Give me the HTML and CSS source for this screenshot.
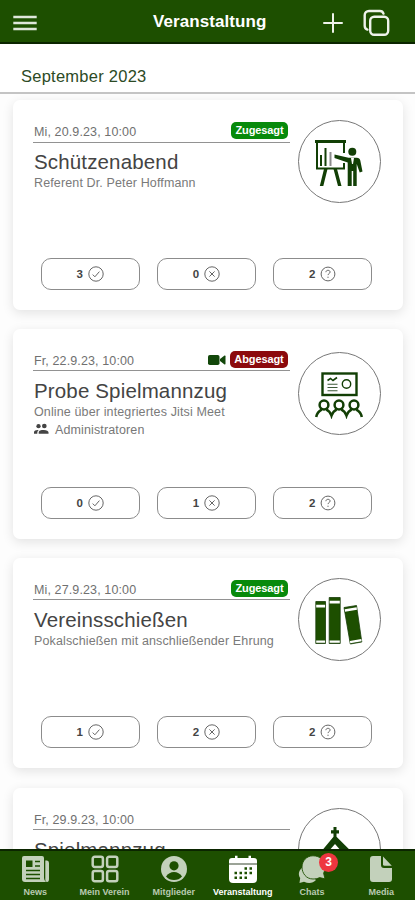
FILE: index.html
```html
<!DOCTYPE html>
<html lang="de">
<head>
<meta charset="utf-8">
<title>Veranstaltung</title>
<link rel="stylesheet" href="styles.css">
</head>
<body>
<svg class="defs" aria-hidden="true">
  <symbol id="check" viewBox="0 0 16 16"><circle cx="8" cy="8" r="7.2"/><path d="M4.7 8.6l2.2 2.2 4.5-5.2"/></symbol>
  <symbol id="cross" viewBox="0 0 16 16"><circle cx="8" cy="8" r="7.2"/><path d="M5.4 5.4l5.2 5.2M10.6 5.4l-5.2 5.2"/></symbol>
  <symbol id="help" viewBox="0 0 16 16"><circle cx="8" cy="8" r="6.9"/><path d="M5.9 6.2c.1-1.3 1-1.9 2.1-1.9 1.2 0 2.1.7 2.1 1.8 0 1.4-2.1 1.5-2.1 3M8 10.7v1.2"/></symbol>
</svg>
<div class="app">
  <header class="header">
    <svg class="menu" viewBox="0 0 26 16"><path d="M1.3 2h23.4M1.3 8h23.4M1.3 14h23.4"/></svg>
    <h1 class="header-title">Veranstaltung</h1>
    <svg class="plus" viewBox="0 0 20 20"><path d="M10 1v18M1 10h18"/></svg>
    <svg class="copy" viewBox="0 0 28 28"><rect x="7.2" y="7.7" width="18" height="18" rx="4"/><path d="M20.5 4.6C19.9 2.900 18.700 2 17 2H6C3.500 2 1.700 3.800 1.700 6.200v10.500c0 2 .9 3.300 2.700 3.900"/></svg>
  </header>
  <h2 class="month">September 2023</h2>
  <main class="list">
    <article class="card card-first">
      <div class="top">
        <div class="info">
          <div class="meta"><span class="date">Mi, 20.9.23, 10:00</span><span class="badge yes">Zugesagt</span></div>
          <h3 class="title">Schützenabend</h3>
          <p class="sub">Referent Dr. Peter Hoffmann</p>
        </div>
        <div class="circle">
          <svg viewBox="0 0 48 48"><g fill="#123f05"><path d="M0 1h31v3H0z"/><path d="M1 3h2v27H1zM1 28.500h29v2H1zM28 3h2v11h-2zM28 24h2v6h-2zM5 16h2v11H5zM9.500 9h2v18h-2z"/><path d="M9 30h3.500L8.300 47H4.800zM18.500 30H22l4.500 17H23z"/><circle cx="37.300" cy="12.700" r="4"/><path d="M19.500 15.500l14 3.200h8.300c2 0 3 1 3.500 2.800l2.200 11-2.800 1.100-3-8.600V47h-3.500V32h-1.500v15h-4V23.500l-13.200-4.500z"/></g><path d="M14.500 13h2v14h-2z" fill="#8c8c8c"/><path d="M36 19h3l-1 6h-1z" fill="#fff"/></svg>
        </div>
      </div>
      <div class="votes">
        <div class="vote">3<svg><use href="#check"/></svg></div><div class="vote">0<svg><use href="#cross"/></svg></div><div class="vote">2<svg><use href="#help"/></svg></div>
      </div>
    </article>
    <article class="card card-online">
      <div class="top">
        <div class="info">
          <div class="meta"><span class="date">Fr, 22.9.23, 10:00</span><svg class="video" viewBox="0 0 18 12"><rect width="11.500" height="10" y="1" rx="1.800"/><path d="M12 5l4.500-3.500q1-.3 1 .7v7.600q0 1-1 .7L12 7z"/></svg><span class="badge no">Abgesagt</span></div>
          <h3 class="title">Probe Spielmannzug</h3>
          <p class="sub">Online über integriertes Jitsi Meet</p>
          <p class="group"><svg viewBox="0 0 16 12"><circle cx="4.800" cy="3" r="2.300"/><circle cx="11" cy="2.800" r="2.500"/><path d="M0 11V9.500C0 7.500 2.500 6.700 5 7c-1.200.8-1.500 2-1.500 4zM5 11V9.800C5 7.500 7.500 7 10.500 7s5 1 5 2.800V11z"/></svg>Administratoren</p>
        </div>
        <div class="circle">
          <svg viewBox="0 0 48 48"><g fill="none" stroke="#123f05"><rect x="7.500" y="2.500" width="34" height="21.500" stroke-width="2.400"/><path d="M12.500 9.500l3-2 2.500 2 4-3" stroke-width="1.600"/><path d="M12.500 13.200h10M12.500 16.500h10M12.500 19.800h10" stroke="#3e5a3a" stroke-width="1.100"/><circle cx="31.500" cy="13" r="4.200" stroke-width="1.400"/><g stroke-width="2.500"><circle cx="9" cy="34" r="4.400"/><circle cx="24" cy="34" r="4.400"/><circle cx="39" cy="34" r="4.400"/><path d="M1.200 46c.6-3.500 2.700-6 5.500-7.400M11.300 38.600c2.600 1 4.200 3 5.200 6 1-3 2.600-5 5.200-6M26.300 38.600c2.600 1 4.200 3 5.200 6 1-3 2.600-5 5.200-6M41.300 38.600c2.800 1.400 4.900 3.900 5.500 7.400"/></g></g></svg>
        </div>
      </div>
      <div class="votes">
        <div class="vote">0<svg><use href="#check"/></svg></div><div class="vote">1<svg><use href="#cross"/></svg></div><div class="vote">2<svg><use href="#help"/></svg></div>
      </div>
    </article>
    <article class="card">
      <div class="top">
        <div class="info">
          <div class="meta"><span class="date">Mi, 27.9.23, 10:00</span><span class="badge yes">Zugesagt</span></div>
          <h3 class="title">Vereinsschießen</h3>
          <p class="sub">Pokalschießen mit anschließender Ehrung</p>
        </div>
        <div class="circle">
          <svg viewBox="0 0 48 48"><g fill="#1d4f00" stroke="#163b08" stroke-width=".8"><path d="M.8 4.500h9.700v42H.8zM14.200.5h11v46h-11zM29 10.500l12.500-2 5.300 36.500-11.500 2z"/></g><g fill="#fff"><path d="M1.200 7.800h8.900v2.600H1.200zM1.200 43.500h8.900v2.300H1.200zM14.600 3.800h10.200v2.600H14.600zM14.600 43.500h10.200v2.300H14.600zM29.700 12.200l11.900-2 .4 2.500-11.900 2zM34.900 44l11.400-2 .3 2.300-11.400 2z"/></g></svg>
        </div>
      </div>
      <div class="votes">
        <div class="vote">1<svg><use href="#check"/></svg></div><div class="vote">2<svg><use href="#cross"/></svg></div><div class="vote">2<svg><use href="#help"/></svg></div>
      </div>
    </article>
    <article class="card card-last">
      <div class="top">
        <div class="info">
          <div class="meta"><span class="date">Fr, 29.9.23, 10:00</span></div>
          <h3 class="title">Spielmannzug</h3>
        </div>
        <div class="circle">
          <svg viewBox="0 0 48 48"><path d="M18.500 0h3v3.200H24v3.300h-2.500v3.300L46 34v12H0V32L18.500 9.800V6.500H16V3.200h2.500z" fill="#123f05"/><path d="M20 17l7 8H13z" fill="#fff"/></svg>
        </div>
      </div>
    </article>
  </main>
  <nav class="nav">
    <a class="tab"><svg viewBox="0 0 28 28"><path d="M3 1h18q2 0 2 2v20q0 2.500 2 4H4q-3 0-3-3V3q0-2 2-2z"/><path d="M24.300 5.500H26q2 0 2 2.500v16q0 3-1.900 3t-1.800-3z"/><path d="M5 5.500h6.500V12H5z" fill="#1d4f00"/><path d="M14 6.500h5M14 11h5M5 15.500h14M5 19.500h14M5 23.500h14" stroke="#1d4f00" stroke-width="1.700"/></svg>News</a>
    <a class="tab"><svg viewBox="0 0 28 28"><g fill="none" stroke="#c3d1bb" stroke-width="2.500"><rect x="1.700" y="1.700" width="10.200" height="10.200" rx="2"/><rect x="16.100" y="1.700" width="10.200" height="10.200" rx="2"/><rect x="1.700" y="16.100" width="10.200" height="10.200" rx="2"/><rect x="16.100" y="16.100" width="10.200" height="10.200" rx="2"/></g></svg>Mein Verein</a>
    <a class="tab"><svg viewBox="0 0 28 28"><circle cx="14" cy="14" r="13"/><circle cx="14" cy="10.800" r="4.600" fill="#1d4f00"/><path d="M6 21.500q3-4.500 8-4.500t8 4.500q-3 3.500-8 3.500t-8-3.500z" fill="#1d4f00"/></svg>Mitglieder</a>
    <a class="tab active"><svg viewBox="0 0 28 28"><path d="M3 3h3V.8h2.500V3h11V.8H22V3h3q3 0 3 3v2H0V6q0-3 3-3zM0 10h28v14q0 4-4 4H4q-4 0-4-4z"/><path d="M0 8h28v2H0z" fill="#9ba397"/><path d="M15.500 13.500H18M20.500 13.500H23M5.500 18H8M10.500 18H13M15.500 18H18M20.500 18H23M5.500 22.700H8M10.500 22.700H13M15.500 22.700H18" stroke="#1d4f00" stroke-width="2.400"/></svg>Veranstaltung</a>
    <a class="tab"><span class="chat"><svg viewBox="0 0 28 28"><path d="M5 11.500C-.5 17 .5 20 2.200 23L1.500 28l4.500-1.300c5 2.300 9 1.300 12-1.700z"/><path d="M15 .8C22 .8 27 5.500 27 12c0 2.200-.4 4.300-1.400 6.200l1.400 5.600-5.500-1.200C19.500 23.800 17 24 15 24 8 24 4 18 4 12S8.500.8 15 .8z" stroke="#1d4f00" stroke-width=".9"/></svg><span class="count">3</span></span>Chats</a>
    <a class="tab"><svg viewBox="0 0 28 28"><path d="M6 1h8v9q0 3 3 3h8v11q0 3-3 3H6q-3 0-3-3V4q0-3 3-3z"/><path d="M16 1.500l8.800 9.200H17.500q-1.500 0-1.500-1.500z"/></svg>Media</a>
  </nav>
</div>
</body>
</html>
```
FILE: styles.css
```css
* { box-sizing: border-box; margin: 0; padding: 0; }
body { font-family: "Liberation Sans", Arial, sans-serif; background: #fdfdfd; }
svg { display: block; flex: none; }
.defs { display: none; }
.app { display: flex; flex-direction: column; height: 900px; width: 415px; overflow: hidden; }

.header { display: flex; align-items: center; height: 44px; flex: none; padding: 0 24px 0 12px; background: #1d4f00; border-bottom: 2px solid #0b2500; }
.header svg { fill: none; stroke: #eef2ea; stroke-linecap: round; }
.menu { width: 26px; height: 16px; margin-top: 4px; }
.header .menu { stroke-width: 2.7; stroke: #dfe7da; stroke-linecap: butt; }
.header-title { margin-left: 115px; width: 170px; font-size: 17px; line-height: 20px; letter-spacing: .08px; color: #fff; margin-top: 1px; }
.plus { width: 20px; height: 20px; stroke-width: 2; margin-top: 3px; }
.copy { width: 28px; height: 28px; stroke-width: 2.4; margin: 3px 0 0 20px; }

.month { flex: none; height: 50px; padding: 22px 0 0 21px; background: #fff; border-bottom: 2px solid #c4c4c4; font-size: 16.500px; line-height: 20px; font-weight: 400; letter-spacing: .25px; color: #2c4a25; }

.list { flex: 1; min-height: 0; overflow: hidden; display: flex; flex-direction: column; gap: 19px; padding: 6px 12px 0 13px; }
.card { flex: none; height: 210px; padding: 20px 22px 0 20px; background: #fff; border-radius: 7px; box-shadow: 0 3px 12px rgba(0,0,0,.11); }
.card-last { margin-top: 1px; }
.top { display: flex; justify-content: space-between; height: 138px; }
.info { width: 257px; }
.meta { display: flex; align-items: center; height: 22px; padding-right: 2px; border-bottom: 1px solid #929292; }
.card-first .meta { height: 23px; }
.date { flex: 1; font-size: 12.500px; line-height: 14px; letter-spacing: .12px; color: #707070; padding: 2px 0 0 1px; }
.card-first .date { padding-top: 1px; }
.badge { width: 57px; height: 17px; border-radius: 5px; font-size: 11px; line-height: 17px; font-weight: 700; color: #fff; text-align: center; white-space: nowrap; letter-spacing: -.1px; }
.card-first .badge { margin-top: -2px; }
.yes { background: #078a0b; }
.no { background: #8c0a0d; width: 58px; }
.video { width: 18px; height: 12px; margin-right: 4px; fill: #12470a; }
.title { padding-left: 1px; margin-top: 8px; font-size: 20.500px; line-height: 24px; font-weight: 400; letter-spacing: .15px; color: #444; white-space: nowrap; }
.card-first .title { margin-top: 7px; }
.sub { padding-left: 1px; font-size: 12.500px; line-height: 18px; color: #7a7a7a; letter-spacing: .13px; white-space: nowrap; }
.group { display: flex; align-items: center; gap: 6px; padding-left: 1px; font-size: 12.500px; line-height: 18px; letter-spacing: .13px; color: #777; }
.group svg { width: 15px; height: 12px; fill: #444; margin-top: -3px; }
.circle { display: flex; align-items: center; justify-content: center; width: 83px; height: 83px; border: 1px solid #777; border-radius: 50%; margin-right: .5px; }
.card-online .circle { margin-top: 3px; }
.circle svg { width: 48px; height: 48px; margin-top: 2px; }
.votes { display: flex; gap: 17px; padding-left: 7.500px; }
.vote { display: flex; align-items: center; justify-content: center; gap: 5px; width: 99.300px; height: 32px; border: 1px solid #8c8c8c; border-radius: 10px; font-size: 11.500px; font-weight: 700; color: #444; }
.vote svg { width: 16px; height: 16px; fill: none; stroke: #666; stroke-width: 1; }

.nav { flex: none; height: 51px; display: grid; grid-template-columns: repeat(6, 69.170px); padding-left: .8px; background: #1d4f00; border-top: 2px solid #0b2500; }
.tab { display: flex; flex-direction: column; align-items: center; padding-top: 4px; font-size: 9px; line-height: 12px; font-weight: 700; color: #b9cab0; fill: #c3d1bb; white-space: nowrap; gap: 3px; }
.tab svg { width: 28px; height: 28px; }
.active { color: #fff; fill: #fff; }
.chat { position: relative; }
.count { position: absolute; top: -2px; right: -12px; width: 19px; height: 19px; border-radius: 50%; background: #ee3640; color: #fff; font-size: 12px; line-height: 19px; text-align: center; }
```
